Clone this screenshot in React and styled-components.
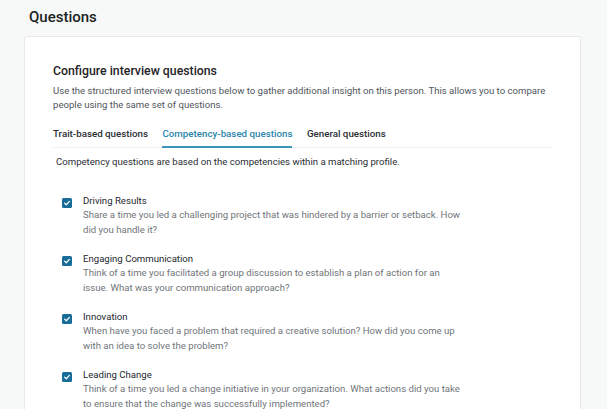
import React from 'react';
import styled, { createGlobalStyle } from 'styled-components';

const GlobalStyle = createGlobalStyle`
    html, body {
        margin: 0;
        padding: 0;
        background: #f7f8f8;
        font-family: Roboto, "Noto Sans", Arial, sans-serif;
        color: #1f2327;
    }
`;

const Page = styled.div`
    padding: 0 24px;
    min-height: 409px;
    overflow: hidden;
`;

const PageTitle = styled.h1`
    margin: 0;
    padding: 9px 0 0 5px;
    height: 27px;
    font-size: 15px;
    font-weight: 500;
    line-height: 17px;
    color: #1b1f23;
`;

const Card = styled.section`
    width: 557px;
    box-sizing: border-box;
    background: #fff;
    border: 1px solid #e7e9eb;
    border-bottom: none;
    border-radius: 3px 3px 0 0;
    padding: 27px 28px 0 28px;
`;

const Heading = styled.h2`
    margin: 0;
    font-size: 12.3px;
    font-weight: 500;
    line-height: 15px;
    color: #1f2327;
`;

const Intro = styled.p`
    margin: 5px 0 0;
    font-size: 9.6px;
    line-height: 14px;
    color: #51565c;
`;

const Tabs = styled.div`
    display: flex;
    gap: 14.5px;
    margin-top: 16px;
    border-bottom: 1px solid #eceeef;
`;

const Tab = styled.button`
    border: none;
    background: none;
    padding: 0 0 6px;
    margin: 0 0 -1px;
    font-family: inherit;
    font-size: 9.75px;
    font-weight: 500;
    line-height: 12px;
    color: ${p => (p.$active ? '#2a86aa' : '#2a2e33')};
    border-bottom: 2px solid ${p => (p.$active ? '#3b96b8' : 'transparent')};
    cursor: pointer;
`;

const Note = styled.p`
    margin: 8px 0 0 3px;
    font-size: 9.6px;
    line-height: 12px;
    color: #2a2e33;
`;

const List = styled.ul`
    list-style: none;
    margin: 26px 0 0;
    padding: 0 0 0 9px;
    display: flex;
    flex-direction: column;
    gap: 15px;
`;

const Item = styled.li`
    display: flex;
    gap: 11px;
    align-items: flex-start;
`;

const Box = styled.span`
    flex: none;
    width: 10px;
    height: 10px;
    margin-top: 3.5px;
    border-radius: 1.5px;
    background: #186c98;
    display: flex;
    align-items: center;
    justify-content: center;
`;

const Text = styled.div`
    max-width: 380px;
`;

const ItemTitle = styled.div`
    font-size: 9.6px;
    line-height: 13px;
    color: #24282d;
`;

const ItemDesc = styled.div`
    margin-top: 1px;
    font-size: 9.6px;
    line-height: 14.5px;
    color: #70757a;
`;

const Check = () => (
    <svg width="8" height="8" viewBox="0 0 10 10">
        <path d="M2 5.2 L4.1 7.2 L8 3" fill="none" stroke="#fff" strokeWidth="1.6" strokeLinecap="round" strokeLinejoin="round" />
    </svg>
);

const questions = [
    {
        title: 'Driving Results',
        text: 'Share a time you led a challenging project that was hindered by a barrier or setback. How did you handle it?',
    },
    {
        title: 'Engaging Communication',
        text: 'Think of a time you facilitated a group discussion to establish a plan of action for an issue. What was your communication approach?',
    },
    {
        title: 'Innovation',
        text: 'When have you faced a problem that required a creative solution? How did you come up with an idea to solve the problem?',
    },
    {
        title: 'Leading Change',
        text: 'Think of a time you led a change initiative in your organization. What actions did you take to ensure that the change was successfully implemented?',
    },
];

export default function App() {
    return (
        <>
        <GlobalStyle />
        <Page>
            <PageTitle>Questions</PageTitle>
            <Card>
                <Heading>Configure interview questions</Heading>
                <Intro>
                    Use the structured interview questions below to gather additional insight on this person. This allows you to compare people using the same set of questions.
                </Intro>
                <Tabs>
                    <Tab>Trait-based questions</Tab>
                    <Tab $active>Competency-based questions</Tab>
                    <Tab>General questions</Tab>
                </Tabs>
                <Note>Competency questions are based on the competencies within a matching profile.</Note>
                <List>
                    {questions.map(q => (
                        <Item key={q.title}>
                            <Box><Check /></Box>
                            <Text>
                                <ItemTitle>{q.title}</ItemTitle>
                                <ItemDesc>{q.text}</ItemDesc>
                            </Text>
                        </Item>
                    ))}
                </List>
            </Card>
        </Page>
        </>
    );
}
